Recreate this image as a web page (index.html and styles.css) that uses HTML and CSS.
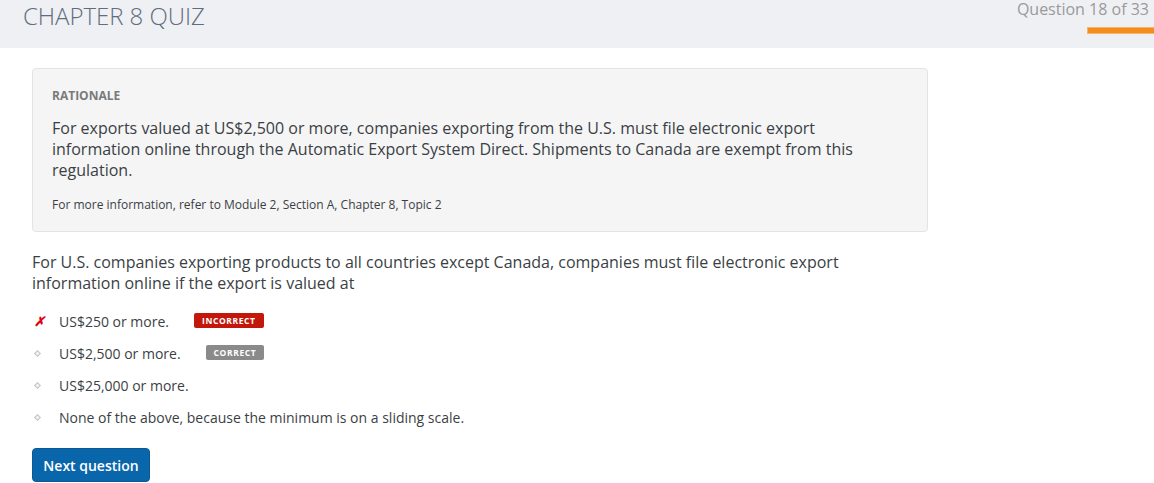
FILE: index.html
```html
<!DOCTYPE html>
<html lang="en">
<head>
<meta charset="utf-8">
<title>Chapter 8 Quiz</title>
<link rel="stylesheet" href="styles.css">
</head>
<body>
<header class="topbar">
  <h1 class="title">CHAPTER 8 QUIZ</h1>
  <div class="progress">
    <div class="progress-label">Question 18 of 33</div>
    <div class="progress-bar"></div>
  </div>
</header>
<main class="content">
  <section class="rationale">
    <h2 class="rationale-title">RATIONALE</h2>
    <p class="rationale-text">For exports valued at US$2,500 or more, companies exporting from the U.S. must file electronic export information online through the Automatic Export System Direct. Shipments to Canada are exempt from this regulation.</p>
    <p class="rationale-ref">For more information, refer to Module 2, Section A, Chapter 8, Topic 2</p>
  </section>
  <p class="question">For U.S. companies exporting products to all countries except Canada, companies must file electronic export information online if the export is valued at</p>
  <ul class="options">
    <li class="option"><span class="mark mark-x">✗</span><span class="opt-text">US$250 or more.</span><span class="badge badge-incorrect">INCORRECT</span></li>
    <li class="option"><span class="mark"><span class="dot"></span></span><span class="opt-text">US$2,500 or more.</span><span class="badge badge-correct">CORRECT</span></li>
    <li class="option"><span class="mark"><span class="dot"></span></span><span class="opt-text">US$25,000 or more.</span></li>
    <li class="option"><span class="mark"><span class="dot"></span></span><span class="opt-text">None of the above, because the minimum is on a sliding scale.</span></li>
  </ul>
  <button class="next-btn" type="button">Next question</button>
</main>
</body>
</html>
```
FILE: styles.css
```css
* { box-sizing: border-box; }
html, body { margin: 0; padding: 0; }
body {
  font-family: "Open Sans", "Liberation Sans", sans-serif;
  color: #3b3f45;
  background: #fff;
  overflow: hidden;
}
.topbar {
  height: 48px;
  background: #eff0f4;
  display: flex;
  justify-content: space-between;
  align-items: flex-start;
  padding-left: 23px;
}
.title {
  margin: 0;
  font-weight: 300;
  font-size: 24px;
  line-height: 32px;
  color: #5f6d7c;
  letter-spacing: -0.05px;
}
.progress {
  display: flex;
  flex-direction: column;
  align-items: flex-end;
  padding-top: 1px;
}
.progress-label {
  font-size: 16px;
  line-height: 17px;
  color: #9a9a9a;
  padding-right: 5px;
}
.progress-bar {
  margin-top: 9px;
  width: 67px;
  height: 7px;
  background: #f28d1e;
  border: 1px solid #f6b46c;
  border-right: none;
}
.content {
  padding: 20px 32px 0 32px;
}
.rationale {
  width: 896px;
  height: 164px;
  background: #f5f5f5;
  border: 1px solid #e3e3e3;
  border-radius: 4px;
  padding: 20px 19px;
}
.rationale-title {
  margin: 0;
  font-size: 12px;
  font-weight: 700;
  line-height: 14px;
  color: #7a7a7a;
}
.rationale-text {
  margin: 15px 0 0 0;
  font-size: 16px;
  line-height: 21px;
  max-width: 820px;
  color: #3b3f45;
}
.rationale-ref {
  margin: 15px 0 0 0;
  font-size: 12px;
  line-height: 17px;
  color: #3b3f45;
}
.question {
  margin: 20px 0 0 0;
  font-size: 16px;
  line-height: 21px;
  max-width: 850px;
}
.options {
  list-style: none;
  margin: 11px 0 0 0;
  padding: 0;
}
.option {
  display: flex;
  align-items: center;
  height: 32px;
  font-size: 14px;
}
.mark {
  width: 27px;
  display: flex;
  align-items: center;
  padding-left: 2px;
}
.mark-x {
  color: #e3000f;
  font-size: 13px;
  font-weight: 700;
  font-style: italic;
}
.dot {
  width: 5px;
  height: 5px;
  margin-left: 1px;
  background: #f2f2f2;
  transform: rotate(45deg);
  border: 1px solid #c4c4c4;
}
.opt-text {
  color: #3b3f45;
}
.badge {
  margin-left: 25px;
  font-size: 8.5px;
  font-weight: 700;
  letter-spacing: 0.6px;
  color: #fff;
  padding: 0 8px;
  height: 15px;
  line-height: 15px;
  border-radius: 2px;
  position: relative;
  top: -1px;
}
.badge-incorrect { background: #c4170c; }
.badge-correct { background: #8a8a8a; }
.next-btn {
  margin-top: 15px;
  width: 118px;
  height: 34px;
  background: #0a66ab;
  border: 1px solid #075a97;
  border-radius: 4px;
  color: #fff;
  font-family: "Open Sans", "Liberation Sans", sans-serif;
  font-size: 14px;
  font-weight: 600;
  padding: 0;
}
```
